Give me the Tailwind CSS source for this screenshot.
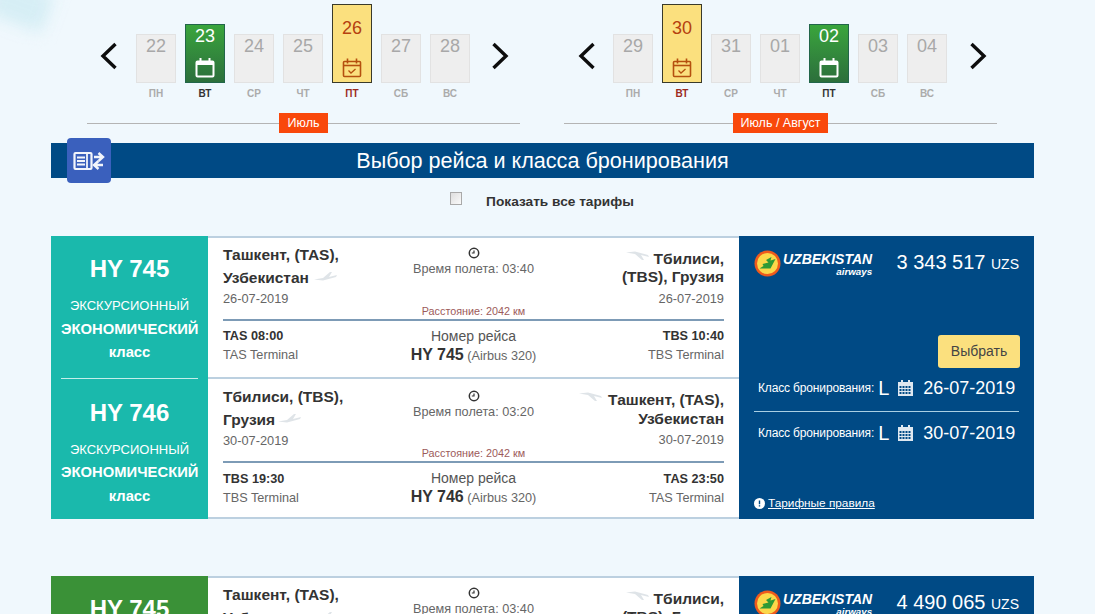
<!DOCTYPE html>
<html lang="ru">
<head>
    <meta charset="UTF-8">
    <meta name="viewport" content="width=device-width, initial-scale=1.0">
    <title>Выбор рейса</title>
    <script src="https://cdn.jsdelivr.net/npm/@tailwindcss/browser@4"></script>
</head>
<body class="relative h-[614px] overflow-hidden bg-[#f0f8fd] font-['Liberation_Sans',Arial,sans-serif]">
    <!-- blurred corner of the page background -->
    <div class="absolute -left-[10px] -top-[16px] h-[40px] w-[60px] rotate-[20deg] bg-[#d6eef5] blur-[8px]"></div>

    <!-- date strips -->
    <div class="relative flex gap-[44px] pl-[87px] pt-[4px]">
        <div class="w-[433px]">
            <div class="flex items-end pl-[13px]">
                <svg class="mb-[29px] mr-[18px] h-[28px] w-[18px]" viewBox="0 0 18 28" fill="none" stroke="#0d0d0d" stroke-width="3.4"><path d="M15.5 2 3 14l12.5 12"/></svg>
                <div class="flex items-end gap-[9px]">
                    <div class="flex w-10 flex-col items-center"><div class="h-[49px] w-10 border border-[#e2e2e2] bg-[#eeeeee] pt-[1px] text-center text-[18px] leading-[20px] text-[#a8a8a8]">22</div><div class="mt-[6px] text-[10px] font-bold leading-[10px] text-[#ababab]">ПН</div></div>
                    <div class="flex w-10 flex-col items-center"><div class="flex h-[59px] w-10 flex-col items-center border border-[#22664a] bg-linear-to-b from-[#3aa53c] to-[#2c6f3b] pt-[1px] text-[18px] leading-[20px] text-white">23<svg class="mt-[11px] h-[21px] w-[20px]" viewBox="0 0 20 21" fill="none" stroke="#fff" stroke-width="2"><rect x="1.5" y="4.5" width="17" height="15" rx="1"/><path d="M1.5 6.5h17" stroke-width="3"/><path d="M5.5 1v5M14.5 1v5"/></svg></div><div class="mt-[6px] text-[10px] font-bold leading-[10px] text-[#333]">ВТ</div></div>
                    <div class="flex w-10 flex-col items-center"><div class="h-[49px] w-10 border border-[#e2e2e2] bg-[#eeeeee] pt-[1px] text-center text-[18px] leading-[20px] text-[#a8a8a8]">24</div><div class="mt-[6px] text-[10px] font-bold leading-[10px] text-[#ababab]">СР</div></div>
                    <div class="flex w-10 flex-col items-center"><div class="h-[49px] w-10 border border-[#e2e2e2] bg-[#eeeeee] pt-[1px] text-center text-[18px] leading-[20px] text-[#a8a8a8]">25</div><div class="mt-[6px] text-[10px] font-bold leading-[10px] text-[#ababab]">ЧТ</div></div>
                    <div class="flex w-10 flex-col items-center"><div class="flex h-[79px] w-10 flex-col items-center border border-[#3a3a2a] bg-[#fbe07e] pt-[13px] text-[18px] leading-[20px] text-[#b5410f]">26<svg class="mt-[19px] h-[21px] w-[20px]" viewBox="0 0 20 21" fill="none" stroke="#b5500f" stroke-width="1.6"><rect x="1.5" y="4.5" width="17" height="15" rx="1"/><path d="M1.5 8.5h17"/><path d="M5.5 1.5v5M14.5 1.5v5"/><path d="m6.5 13.5 2.5 2.5 4.5-4" stroke-width="1.3"/></svg></div><div class="mt-[6px] text-[10px] font-bold leading-[10px] text-[#9c2a1c]">ПТ</div></div>
                    <div class="flex w-10 flex-col items-center"><div class="h-[49px] w-10 border border-[#e2e2e2] bg-[#eeeeee] pt-[1px] text-center text-[18px] leading-[20px] text-[#a8a8a8]">27</div><div class="mt-[6px] text-[10px] font-bold leading-[10px] text-[#ababab]">СБ</div></div>
                    <div class="flex w-10 flex-col items-center"><div class="h-[49px] w-10 border border-[#e2e2e2] bg-[#eeeeee] pt-[1px] text-center text-[18px] leading-[20px] text-[#a8a8a8]">28</div><div class="mt-[6px] text-[10px] font-bold leading-[10px] text-[#ababab]">ВС</div></div>
                </div>
                <svg class="mb-[29px] ml-[21px] h-[28px] w-[18px]" viewBox="0 0 18 28" fill="none" stroke="#0d0d0d" stroke-width="3.4"><path d="M2.5 2 15 14 2.5 26"/></svg>
            </div>
            <div class="mt-[14px] flex h-[20px] items-center">
                <div class="h-px flex-1 bg-[#b4b4b4]"></div>
                <div class="bg-[#f9480b] px-[9px] text-[12.5px] leading-[20px] text-white">Июль</div>
                <div class="h-px flex-1 bg-[#b4b4b4]"></div>
            </div>
        </div>

        <div class="w-[433px]">
            <div class="flex items-end pl-[14px]">
                <svg class="mb-[29px] mr-[17px] h-[28px] w-[18px]" viewBox="0 0 18 28" fill="none" stroke="#0d0d0d" stroke-width="3.4"><path d="M15.5 2 3 14l12.5 12"/></svg>
                <div class="flex items-end gap-[9px]">
                    <div class="flex w-10 flex-col items-center"><div class="h-[49px] w-10 border border-[#e2e2e2] bg-[#eeeeee] pt-[1px] text-center text-[18px] leading-[20px] text-[#a8a8a8]">29</div><div class="mt-[6px] text-[10px] font-bold leading-[10px] text-[#ababab]">ПН</div></div>
                    <div class="flex w-10 flex-col items-center"><div class="flex h-[79px] w-10 flex-col items-center border border-[#3a3a2a] bg-[#fbe07e] pt-[13px] text-[18px] leading-[20px] text-[#b5410f]">30<svg class="mt-[19px] h-[21px] w-[20px]" viewBox="0 0 20 21" fill="none" stroke="#b5500f" stroke-width="1.6"><rect x="1.5" y="4.5" width="17" height="15" rx="1"/><path d="M1.5 8.5h17"/><path d="M5.5 1.5v5M14.5 1.5v5"/><path d="m6.5 13.5 2.5 2.5 4.5-4" stroke-width="1.3"/></svg></div><div class="mt-[6px] text-[10px] font-bold leading-[10px] text-[#9c2a1c]">ВТ</div></div>
                    <div class="flex w-10 flex-col items-center"><div class="h-[49px] w-10 border border-[#e2e2e2] bg-[#eeeeee] pt-[1px] text-center text-[18px] leading-[20px] text-[#a8a8a8]">31</div><div class="mt-[6px] text-[10px] font-bold leading-[10px] text-[#ababab]">СР</div></div>
                    <div class="flex w-10 flex-col items-center"><div class="h-[49px] w-10 border border-[#e2e2e2] bg-[#eeeeee] pt-[1px] text-center text-[18px] leading-[20px] text-[#a8a8a8]">01</div><div class="mt-[6px] text-[10px] font-bold leading-[10px] text-[#ababab]">ЧТ</div></div>
                    <div class="flex w-10 flex-col items-center"><div class="flex h-[59px] w-10 flex-col items-center border border-[#22664a] bg-linear-to-b from-[#3aa53c] to-[#2c6f3b] pt-[1px] text-[18px] leading-[20px] text-white">02<svg class="mt-[11px] h-[21px] w-[20px]" viewBox="0 0 20 21" fill="none" stroke="#fff" stroke-width="2"><rect x="1.5" y="4.5" width="17" height="15" rx="1"/><path d="M1.5 6.5h17" stroke-width="3"/><path d="M5.5 1v5M14.5 1v5"/></svg></div><div class="mt-[6px] text-[10px] font-bold leading-[10px] text-[#333]">ПТ</div></div>
                    <div class="flex w-10 flex-col items-center"><div class="h-[49px] w-10 border border-[#e2e2e2] bg-[#eeeeee] pt-[1px] text-center text-[18px] leading-[20px] text-[#a8a8a8]">03</div><div class="mt-[6px] text-[10px] font-bold leading-[10px] text-[#ababab]">СБ</div></div>
                    <div class="flex w-10 flex-col items-center"><div class="h-[49px] w-10 border border-[#e2e2e2] bg-[#eeeeee] pt-[1px] text-center text-[18px] leading-[20px] text-[#a8a8a8]">04</div><div class="mt-[6px] text-[10px] font-bold leading-[10px] text-[#ababab]">ВС</div></div>
                </div>
                <svg class="mb-[29px] ml-[22px] h-[28px] w-[18px]" viewBox="0 0 18 28" fill="none" stroke="#0d0d0d" stroke-width="3.4"><path d="M2.5 2 15 14 2.5 26"/></svg>
            </div>
            <div class="mt-[14px] flex h-[20px] items-center">
                <div class="h-px flex-1 bg-[#b4b4b4]"></div>
                <div class="bg-[#f9480b] px-[8px] text-[12.5px] leading-[20px] text-white">Июль / Август</div>
                <div class="h-px flex-1 bg-[#b4b4b4]"></div>
            </div>
        </div>
    </div>

    <!-- title bar -->
    <div class="relative ml-[51px] mt-[10px] h-[35px] w-[983px] bg-[#004a85] text-center text-[21.6px] leading-[35px] text-white">
        Выбор рейса и класса бронирования
        <div class="absolute left-[16px] -top-[5px] flex h-[45px] w-[44px] items-center justify-center rounded-[4px] bg-[#3a60bd]">
            <svg class="h-[24px] w-[32px]" viewBox="0 0 32 24" fill="none" stroke="#f2f5fb" stroke-width="2.2"><rect x="1.5" y="4" width="17" height="16" rx="1"/><path d="M4 8.500h8M4 12h8M4 15.500h8M14 4v16" stroke-width="1.800"/><path d="M21 8h8m-3.500-4L30 8l-4.500 4" stroke-width="2.400"/><path d="M30 16h-8m3.500-4L21 16l4.500 4" stroke-width="2.400"/></svg>
        </div>
    </div>

    <div class="flex h-[44px] items-center justify-center gap-[24px] pr-[11px] pt-[1px]">
        <span class="mb-[4px] h-[13px] w-[12px] border border-[#a9a9a9] bg-linear-to-br from-[#dedede] to-[#fafafa]"></span>
        <span class="pt-[2px] text-[13.7px] font-bold leading-[18px] text-[#333]">Показать все тарифы</span>
    </div>

    <!-- first fare -->
    <div class="mx-[51px] mt-[14px] flex h-[283px] w-[983px]">
        <div class="flex w-[157px] flex-col bg-[#1ab9ac] text-center text-white">
            <div class="mx-[10px] h-[143px] border-b border-[#c5eeea]">
                <div class="pt-[20px] text-[24px] font-bold leading-[26px]">HY 745</div>
                <div class="mt-[14px] text-[13px] leading-[20px]">ЭКСКУРСИОННЫЙ</div>
                <div class="mt-[3px] text-[14.8px] font-bold leading-[20px]">ЭКОНОМИЧЕСКИЙ</div>
                <div class="mt-[3px] text-[14.8px] font-bold leading-[20px]">класс</div>
            </div>
            <div class="mx-[10px]">
                <div class="pt-[21px] text-[24px] font-bold leading-[26px]">HY 746</div>
                <div class="mt-[14px] text-[13px] leading-[20px]">ЭКСКУРСИОННЫЙ</div>
                <div class="mt-[2px] text-[14.8px] font-bold leading-[20px]">ЭКОНОМИЧЕСКИЙ</div>
                <div class="mt-[4px] text-[14.8px] font-bold leading-[20px]">класс</div>
            </div>
        </div>

        <div class="flex w-[531px] flex-col bg-white">
            <div class="h-[143px] border-y-2 border-[#bcd0e0] px-[15px]">
                <div class="grid h-[83px] grid-cols-[1fr_auto_1fr] border-b-2 border-[#7d9bb6]">
                    <div class="pt-[5px]">
                        <div class="relative text-[15.5px] font-bold leading-[23px] text-[#333]">Ташкент, (TAS),<br>Узбекистан
                            <svg class="absolute left-[91px] top-[27px] h-[12px] w-[24px]" viewBox="0 0 24 12" fill="#dfe4e8"><path d="M0 9.500 9 8 16 2h2l-3 5 8-2-1 2-13 3.500z"/></svg>
                        </div>
                        <div class="text-[12.8px] leading-[20px] text-[#666]">26-07-2019</div>
                    </div>
                    <div class="flex flex-col items-center pt-[9px]">
                        <svg class="h-[12px] w-[12px]" viewBox="0 0 12 12" fill="none" stroke="#333" stroke-width="1.500"><circle cx="6" cy="6" r="4.700"/><path d="M6 3.500V6H3.800" stroke-width="1.200"/></svg>
                        <div class="mt-[1px] text-[12.7px] leading-[18px] text-[#666]">Время полета: 03:40</div>
                        <div class="mt-[27px] text-[10.8px] leading-[12px] text-[#9c5a5a]">Расстояние: 2042 км</div>
                    </div>
                    <div class="pt-[12px] text-right">
                        <div class="relative text-[15.5px] font-bold leading-[18px] text-[#333]">Тбилиси,<br>(TBS), Грузия
                            <svg class="absolute right-[74px] top-0 h-[12px] w-[24px] -scale-y-100" viewBox="0 0 24 12" fill="#dfe4e8"><path d="M0 9.500 9 8 16 2h2l-3 5 8-2-1 2-13 3.500z"/></svg>
                        </div>
                        <div class="mt-[3px] text-[12.8px] leading-[20px] text-[#666]">26-07-2019</div>
                    </div>
                </div>
                <div class="grid grid-cols-[1fr_auto_1fr] pt-[5px]">
                    <div>
                        <div class="text-[12.7px] font-bold leading-[20px] text-[#333]">TAS 08:00</div>
                        <div class="text-[12.7px] leading-[18px] text-[#666]">TAS Terminal</div>
                    </div>
                    <div class="text-center">
                        <div class="text-[14px] leading-[20px] text-[#555]">Номер рейса</div>
                        <div class="text-[12.7px] leading-[18px] text-[#666]"><b class="text-[16px] text-[#333]">HY 745</b> (Airbus 320)</div>
                    </div>
                    <div class="text-right">
                        <div class="text-[12.7px] font-bold leading-[20px] text-[#333]">TBS 10:40</div>
                        <div class="text-[12.7px] leading-[18px] text-[#666]">TBS Terminal</div>
                    </div>
                </div>
            </div>
            <div class="h-[140px] border-b-2 border-[#bcd0e0] px-[15px]">
                <div class="grid h-[84px] grid-cols-[1fr_auto_1fr] border-b-2 border-[#7d9bb6]">
                    <div class="pt-[6px]">
                        <div class="relative text-[15.5px] font-bold leading-[23px] text-[#333]">Тбилиси, (TBS),<br>Грузия
                            <svg class="absolute left-[55px] top-[27px] h-[12px] w-[24px]" viewBox="0 0 24 12" fill="#dfe4e8"><path d="M0 9.500 9 8 16 2h2l-3 5 8-2-1 2-13 3.500z"/></svg>
                        </div>
                        <div class="text-[12.8px] leading-[20px] text-[#666]">30-07-2019</div>
                    </div>
                    <div class="flex flex-col items-center pt-[11px]">
                        <svg class="h-[12px] w-[12px]" viewBox="0 0 12 12" fill="none" stroke="#333" stroke-width="1.500"><circle cx="6" cy="6" r="4.700"/><path d="M6 3.500V6H3.800" stroke-width="1.200"/></svg>
                        <div class="mt-[1px] text-[12.7px] leading-[18px] text-[#666]">Время полета: 03:20</div>
                        <div class="mt-[26px] text-[10.8px] leading-[12px] text-[#9c5a5a]">Расстояние: 2042 км</div>
                    </div>
                    <div class="pt-[11px] text-right">
                        <div class="relative text-[15.5px] font-bold leading-[19px] text-[#333]">Ташкент, (TAS),<br>Узбекистан
                            <svg class="absolute right-[121px] top-[1px] h-[12px] w-[24px] -scale-y-100" viewBox="0 0 24 12" fill="#dfe4e8"><path d="M0 9.500 9 8 16 2h2l-3 5 8-2-1 2-13 3.500z"/></svg>
                        </div>
                        <div class="mt-[2px] text-[12.8px] leading-[20px] text-[#666]">30-07-2019</div>
                    </div>
                </div>
                <div class="grid grid-cols-[1fr_auto_1fr] pt-[6px]">
                    <div>
                        <div class="text-[12.7px] font-bold leading-[20px] text-[#333]">TBS 19:30</div>
                        <div class="text-[12.7px] leading-[18px] text-[#666]">TBS Terminal</div>
                    </div>
                    <div class="-mt-[1px] text-center">
                        <div class="text-[14px] leading-[20px] text-[#555]">Номер рейса</div>
                        <div class="text-[12.7px] leading-[18px] text-[#666]"><b class="text-[16px] text-[#333]">HY 746</b> (Airbus 320)</div>
                    </div>
                    <div class="text-right">
                        <div class="text-[12.7px] font-bold leading-[20px] text-[#333]">TAS 23:50</div>
                        <div class="text-[12.7px] leading-[18px] text-[#666]">TAS Terminal</div>
                    </div>
                </div>
            </div>
        </div>

        <div class="flex w-[295px] flex-col bg-[#004a85] pl-[15px] pr-[14px] text-white">
            <div class="flex items-start justify-between pt-[14px]">
                <div class="flex">
                    <svg class="h-[27px] w-[27px]" viewBox="0 0 27 27"><circle cx="13.500" cy="13.500" r="13" fill="#ee5a1c"/><circle cx="13.500" cy="13.500" r="10.500" fill="#fbd84a"/><path d="M5.500 18.500h11l5-9.500-5 1.500 1-3.500-5.500 3 2.500 2.500-6 1.500 1 2z" fill="#2f9a35"/></svg>
                    <div class="ml-[2px] text-right italic">
                        <div class="pt-[1px] text-[14px] font-bold leading-[16px]">UZBEKISTAN</div>
                        <div class="text-[9.8px] font-bold leading-[10px]">airways</div>
                    </div>
                </div>
                <div class="pr-[1px] text-[20px] leading-[24px]">3 343 517 <span class="text-[14px]">UZS</span></div>
            </div>
            <button class="ml-auto mt-[58px] h-[33px] w-[82px] rounded-[3px] bg-[#fbe07e] text-[14px] text-[#444]">Выбрать</button>
            <div class="mt-[3px] flex h-[34px] items-center pl-[4px]">
                <span class="text-[12px] tracking-[-0.15px]">Класс бронирования:</span>
                <span class="ml-[4px] text-[20px] leading-[24px]">L</span>
                <svg class="ml-[9px] h-[16px] w-[15px]" viewBox="0 0 15 16" fill="#dfe8f0"><path d="M3 0h2v2h5V0h2v2h3v14H0V2h3zM1.500 6v2h2V6zm3 0v2h2V6zm3 0v2h2V6zm3 0v2h2V6zM1.500 9v2h2V9zm3 0v2h2V9zm3 0v2h2V9zm3 0v2h2V9zm-9 3v2h2v-2zm3 0v2h2v-2zm3 0v2h2v-2zm3 0v2h2v-2z"/></svg>
                <span class="ml-[10px] text-[18px] leading-[24px]">26-07-2019</span>
            </div>
            <div class="mr-[1px] mt-[6px] h-px bg-[#a9cfe3]"></div>
            <div class="mt-[4px] flex h-[34px] items-center pl-[4px]">
                <span class="text-[12px] tracking-[-0.15px]">Класс бронирования:</span>
                <span class="ml-[4px] text-[20px] leading-[24px]">L</span>
                <svg class="ml-[9px] h-[16px] w-[15px]" viewBox="0 0 15 16" fill="#dfe8f0"><path d="M3 0h2v2h5V0h2v2h3v14H0V2h3zM1.500 6v2h2V6zm3 0v2h2V6zm3 0v2h2V6zm3 0v2h2V6zM1.500 9v2h2V9zm3 0v2h2V9zm3 0v2h2V9zm3 0v2h2V9zm-9 3v2h2v-2zm3 0v2h2v-2zm3 0v2h2v-2zm3 0v2h2v-2z"/></svg>
                <span class="ml-[10px] text-[18px] leading-[24px]">30-07-2019</span>
            </div>
            <div class="mt-auto flex items-center pb-[8px]">
                <svg class="mr-[3px] h-[11px] w-[11px]" viewBox="0 0 11 11"><circle cx="5.500" cy="5.500" r="5.500" fill="#fff"/><path d="M4.800 2.500h1.400v3.800H4.800zM4.800 7.200h1.400v1.400H4.800z" fill="#004a85"/></svg>
                <span class="text-[11.8px] leading-[16px] underline">Тарифные правила</span>
            </div>
        </div>
    </div>

    <!-- second fare, runs past the bottom of the window -->
    <div class="mx-[51px] mt-[57px] flex h-[283px] w-[983px]">
        <div class="w-[157px] bg-[#3a9137] text-center text-white">
            <div class="pt-[20px] text-[24px] font-bold leading-[26px]">HY 745</div>
        </div>
        <div class="w-[531px] border-t-2 border-[#bcd0e0] bg-white px-[15px]">
            <div class="grid grid-cols-[1fr_auto_1fr]">
                <div class="pt-[5px]">
                    <div class="relative text-[15.5px] font-bold leading-[23px] text-[#333]">Ташкент, (TAS),<br>Узбекистан
                        <svg class="absolute left-[91px] top-[27px] h-[12px] w-[24px]" viewBox="0 0 24 12" fill="#dfe4e8"><path d="M0 9.500 9 8 16 2h2l-3 5 8-2-1 2-13 3.500z"/></svg>
                    </div>
                </div>
                <div class="flex flex-col items-center pt-[9px]">
                    <svg class="h-[12px] w-[12px]" viewBox="0 0 12 12" fill="none" stroke="#333" stroke-width="1.500"><circle cx="6" cy="6" r="4.700"/><path d="M6 3.500V6H3.800" stroke-width="1.200"/></svg>
                    <div class="mt-[1px] text-[12.7px] leading-[18px] text-[#666]">Время полета: 03:40</div>
                </div>
                <div class="pt-[12px] text-right">
                    <div class="relative text-[15.5px] font-bold leading-[18px] text-[#333]">Тбилиси,<br>(TBS), Грузия
                        <svg class="absolute right-[74px] top-0 h-[12px] w-[24px] -scale-y-100" viewBox="0 0 24 12" fill="#dfe4e8"><path d="M0 9.500 9 8 16 2h2l-3 5 8-2-1 2-13 3.500z"/></svg>
                    </div>
                </div>
            </div>
        </div>
        <div class="w-[295px] bg-[#004a85] pl-[15px] pr-[14px] text-white">
            <div class="flex items-start justify-between pt-[14px]">
                <div class="flex">
                    <svg class="h-[27px] w-[27px]" viewBox="0 0 27 27"><circle cx="13.500" cy="13.500" r="13" fill="#ee5a1c"/><circle cx="13.500" cy="13.500" r="10.500" fill="#fbd84a"/><path d="M5.500 18.500h11l5-9.500-5 1.500 1-3.500-5.500 3 2.500 2.500-6 1.500 1 2z" fill="#2f9a35"/></svg>
                    <div class="ml-[2px] text-right italic">
                        <div class="pt-[1px] text-[14px] font-bold leading-[16px]">UZBEKISTAN</div>
                        <div class="text-[9.8px] font-bold leading-[10px]">airways</div>
                    </div>
                </div>
                <div class="pr-[1px] text-[20px] leading-[24px]">4 490 065 <span class="text-[14px]">UZS</span></div>
            </div>
        </div>
    </div>
</body>
</html>
